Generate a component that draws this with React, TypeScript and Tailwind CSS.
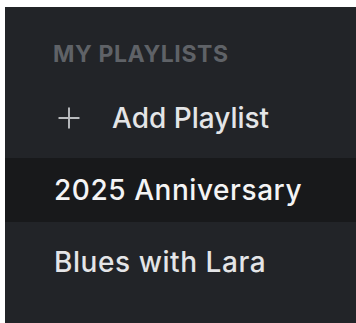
const playlists = [
  { name: "2025 Anniversary", active: true },
  { name: "Blues with Lara", active: false },
];

export default function App() {
  return (
    <div className="min-h-screen bg-white pl-[5px] pt-[7px]" style={{ fontFamily: "Inter, 'Noto Sans', sans-serif" }}>
      <div className="h-[316px] bg-[#222428] pt-[33px]">
        <h2 className="px-[48px] text-[23px] leading-[28px] font-bold tracking-[0.025em] text-[#5f6267]">MY PLAYLISTS</h2>
        <div className="mt-[18px] flex flex-col gap-[8px]">
          <button className="flex h-[64px] items-center gap-[30px] px-[51px] text-left">
            <svg width="26" height="26" viewBox="0 0 24 24" fill="none" stroke="#b9bbbe" strokeWidth="1.8" strokeLinecap="round">
              <path d="M12 3v18M3 12h18" />
            </svg>
            <span className="text-[28px] font-medium text-[#e4e5e7]">Add Playlist</span>
          </button>
          {playlists.map((p) => (
            <div
              key={p.name}
              className={`flex h-[64px] items-center px-[49px] text-[28px] font-medium tracking-[0.02em] ${
                p.active ? "bg-[#18191b] text-[#f4f4f5]" : "text-[#e4e5e7]"
              }`}
            >
              {p.name}
            </div>
          ))}
        </div>
      </div>
    </div>
  );
}
